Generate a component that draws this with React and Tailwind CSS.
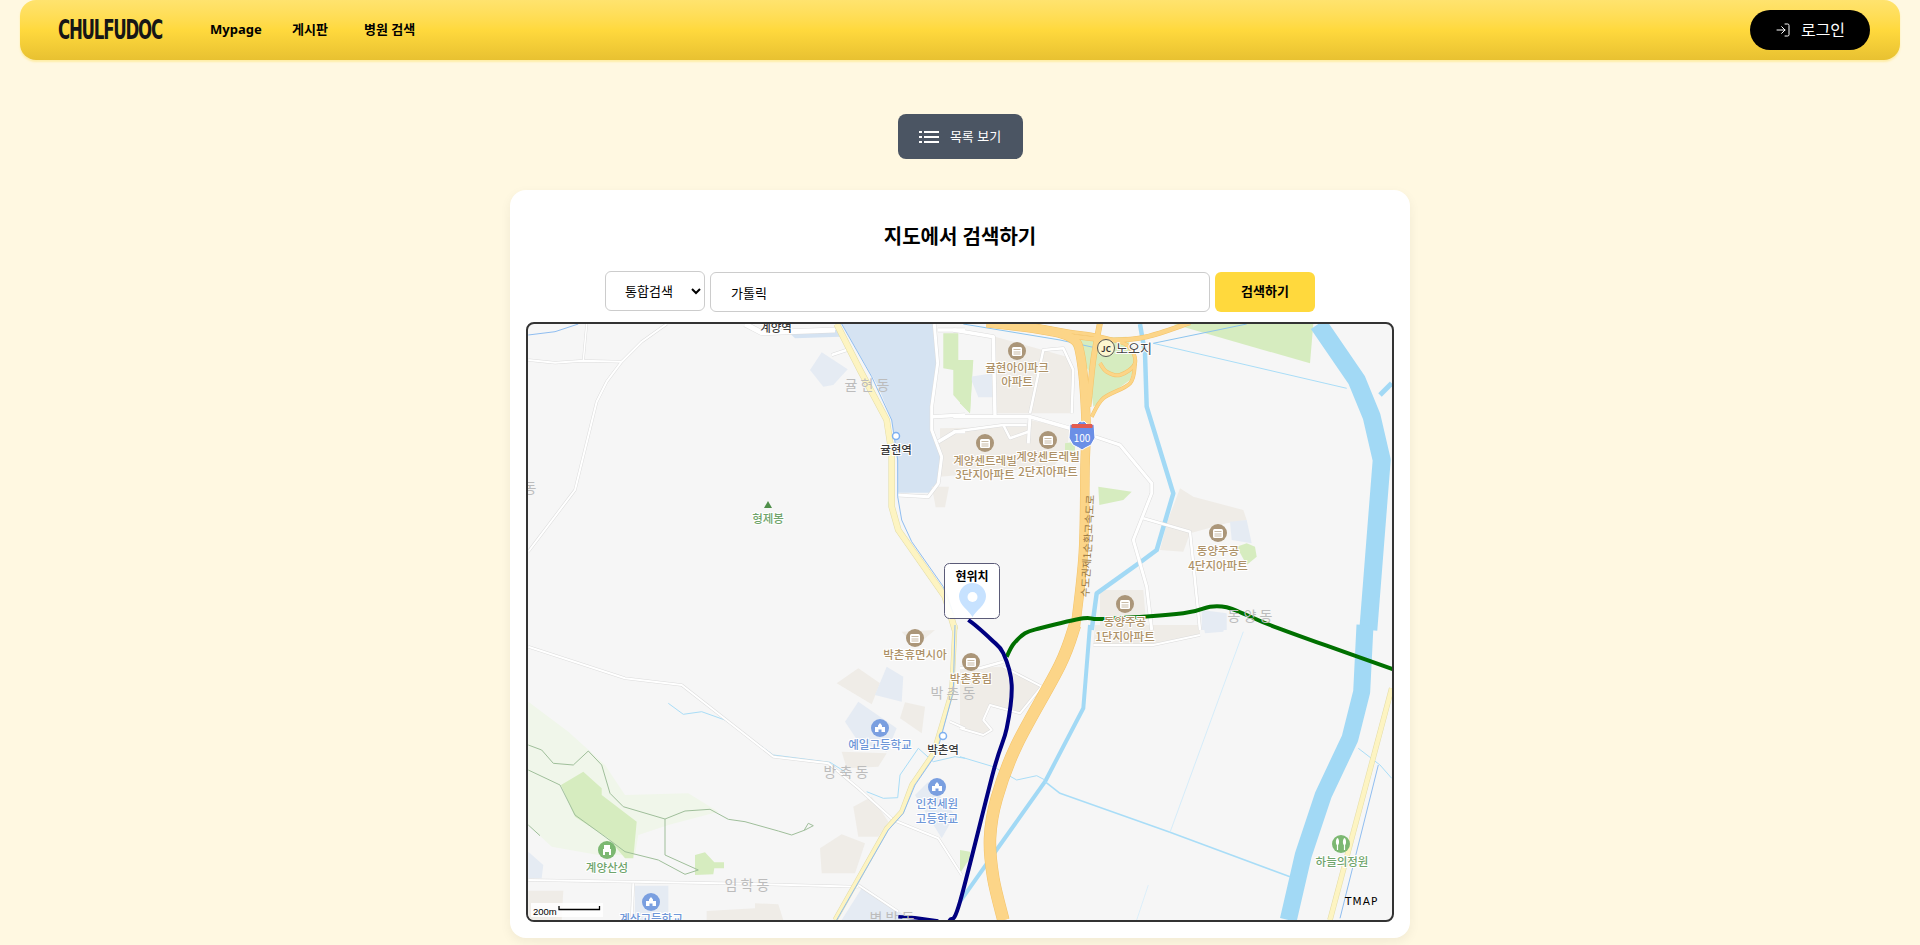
import React from "react";
import { LogIn } from "lucide-react";

const O = { a: [525, 320], b: [960, 320], c: [525, 625], d: [960, 625] };
const pts = (k, s) =>
  s.trim().split(/\s+/).map((p) => {
    const [x, y] = p.split(",");
    return [O[k][0] + x / 3, O[k][1] + y / 3];
  });
const pth = (k, s, close) =>
  "M" + pts(k, s).map(([x, y]) => `${x.toFixed(1)},${y.toFixed(1)}`).join("L") + (close ? "Z" : "");
const smooth = (p) => {
  let d = `M${p[0][0].toFixed(1)},${p[0][1].toFixed(1)}`;
  for (let i = 0; i < p.length - 1; i++) {
    const a = p[i - 1] || p[i], b = p[i], c = p[i + 1], e = p[i + 2] || c;
    d += `C${(b[0] + (c[0] - a[0]) / 6).toFixed(1)},${(b[1] + (c[1] - a[1]) / 6).toFixed(1)} ${(c[0] - (e[0] - b[0]) / 6).toFixed(1)},${(c[1] - (e[1] - b[1]) / 6).toFixed(1)} ${c[0].toFixed(1)},${c[1].toFixed(1)}`;
  }
  return d;
};
const spth = (k, s) => smooth(pts(k, s));

const BEIGE = "#efece7", PALE = "#e5ebf3", GREEN = "#d6ecbf", LIGHTG = "#f0f6ea", LAKE = "#d5e3f2", RIVER = "#a2d9f5", THIN = "#a9ddf7";

const fills = [
  [LIGHTG, "c", "10,230 130,320 240,420 300,510 490,505 580,560 430,600 340,630 330,690 220,690 80,665 10,600"],
  [LAKE, "a", "950,12 1228,12 1238,130 1218,260 1220,330 1250,410 1240,480 1215,518 1118,518 1115,400 1100,300 1060,200"],
  [LAKE, "a", "790,35 940,30 945,50 810,55"],
  [PALE, "a", "855,150 890,97 968,148 925,195 895,200"],
  [GREEN, "a", "1255,40 1300,40 1300,120 1345,120 1335,280 1320,265 1285,225 1285,150 1255,145"],
  [BEIGE, "a", "1240,370 1285,335 1320,335 1320,400 1250,400"],
  [BEIGE, "a", "1220,500 1272,500 1260,562 1232,562"],
  [BEIGE, "b", "105,50 320,110 340,160 335,280 110,280"],
  [BEIGE, "b", "-60,325 200,320 210,300 330,325 320,390 280,440 -60,470"],
  [PALE, "b", "30,170 100,160 100,232 55,232"],
  [GREEN, "b", "0,120 38,120 30,280 0,250"],
  [GREEN, "b", "330,60 500,50 530,120 510,180 400,260 385,150 350,100"],
  [GREEN, "b", "640,12 1060,12 1050,130"],
  [GREEN, "b", "415,500 515,515 490,540 418,555"],
  [GREEN, "b", "315,370 345,365 345,400 315,400"],
  [BEIGE, "b", "660,505 700,530 850,570 860,600 800,610 690,640 670,695 600,690 620,610"],
  [PALE, "b", "810,605 860,600 875,670 815,660"],
  [GREEN, "b", "860,670 885,680 890,710 860,735 830,680"],
  [BEIGE, "b", "420,810 550,810 560,930 420,930"],
  [PALE, "b", "725,870 800,880 800,930 725,930"],
  [BEIGE, "d", "405,0 720,0 720,30 580,60 400,60"],
  [PALE, "d", "730,0 795,0 790,20 735,25"],
  [BEIGE, "d", "0,130 130,125 245,185 180,265 90,240 70,285 95,315 70,330 0,310"],
  [BEIGE, "c", "1130,20 1230,15 1170,65"],
  [GREEN, "d", "0,675 30,680 30,700 0,745"],
  [GREEN, "c", "108,480 175,440 230,490 230,510 335,590 325,700 300,700 250,640 150,575"],
  [GREEN, "c", "510,690 540,682 568,712 597,712 597,730 568,730 565,748 510,750"],
  [BEIGE, "c", "935,175 1000,130 1065,175 1040,238"],
  [PALE, "c", "1050,210 1085,125 1135,155 1130,230"],
  [PALE, "c", "960,290 1000,230 1115,310 1085,380 1000,350"],
  [BEIGE, "c", "950,380 1085,385 1060,425 965,430"],
  [BEIGE, "c", "1125,280 1140,232 1200,245 1190,325"],
  [BEIGE, "c", "985,545 1040,515 1090,590 1060,635 1000,635"],
  [BEIGE, "c", "885,670 950,628 1020,655 990,745 890,745"],
  [PALE, "c", "1170,510 1210,470 1290,570 1250,640"],
  [PALE, "c", "10,680 55,720 50,760 10,760"],
  [PALE, "c", "330,782 430,782 430,885 330,885"],
  [BEIGE, "c", "10,797 115,797 110,885 10,885"],
  [BEIGE, "c", "545,858 690,850 690,835 760,838 775,885 545,885"],
  [PALE, "c", "1010,790 1130,865 1160,885 950,885"],
];

const water = [
  ["#8fbdf0", 1, "a", "10,45 90,35 160,12"],
  [RIVER, 4.5, "b", "540,12 555,100 560,260 640,520 590,690 550,720 410,820 395,930"],
  [RIVER, 4, "d", "390,0 370,250 255,470 120,660 0,830"],
  [RIVER, 3.5, "c", "1320,1000 1260,1080"],
  [RIVER, 18, "b", "1075,12 1190,180 1235,290 1265,420 1225,930"],
  [RIVER, 17, "d", "1215,0 1205,200 1170,340 1090,510 1030,690 985,885"],
  [RIVER, 5, "b", "1295,190 1260,225"],
  [THIN, 1, "b", "580,70 1160,205"],
  ["#8cc4ee", 1, "b", "860,12 580,70"],
  ["#8cc4ee", 1, "b", "10,12 300,60 400,82"],
  [THIN, 1, "d", "0,395 100,425 170,465 230,452 255,465"],
  [THIN, 1.6, "d", "255,470 300,505 630,622 990,755"],
  ["#cdeafa", 0.8, "d", "630,622 850,20"],
  ["#d5eefb", 0.8, "d", "530,885 565,780"],
  [THIN, 1, "d", "1195,370 1260,420 1295,460"],
  [THIN, 1, "c", "430,235 475,268 530,260 600,285 745,390 915,412 960,440"],
  [THIN, 1, "c", "1025,500 1075,520 1118,518 1125,450 1180,370 1225,410 1290,395 1320,400"],
];

const roads = [
  [2, "a", "10,120 90,128 175,122 290,125"],
  [1.5, "a", "185,12 175,122"],
  [2, "a", "425,12 350,65 290,125 245,185 215,245 150,510 10,695"],
  [5, "a", "660,12 710,38 930,30"],
  [2.5, "a", "920,105 965,90"],
  [3.5, "a", "1238,30 1320,30"],
  [3.5, "a", "1220,290 1320,285"],
  [3.5, "a", "1240,365 1290,335 1320,335"],
  [3, "a", "1118,525 1210,530 1240,490 1250,410 1220,330 1220,260 1238,130 1228,12"],
  [3.5, "b", "-20,30 100,50 105,290"],
  [3.5, "b", "-20,290 210,290 330,325"],
  [3, "b", "210,290 205,370"],
  [2.5, "b", "-20,335 130,315 200,315"],
  [2.5, "b", "130,315 150,355 205,335"],
  [2.5, "b", "210,280 250,90 310,85 340,150 335,280"],
  [3, "b", "405,350 480,375 575,490 575,520 520,660 560,800 575,930"],
  [2.5, "b", "550,595 690,635 720,930"],
  [2.5, "d", "130,110 60,130 0,130"],
  [2, "d", "130,125 245,185 180,265 90,240 70,285 95,315 70,330 0,310"],
  [2, "d", "400,60 580,60 720,30"],
  [2, "c", "10,65 300,160 470,180 745,395 910,415 1000,490 1105,585 1240,640 1310,750"],
  [2, "c", "10,765 590,775 1000,785"],
  [2, "c", "1000,780 1120,860"],
  [2, "c", "325,775 320,885"],
  [2, "c", "1275,290 1320,310"],
];

const trails = [
  "10,360 50,375 85,415 145,420 190,378 230,420 255,505 295,545 420,582 480,558 555,553 610,583 660,590 760,618 800,630 840,615 865,602 850,595 838,615",
  "10,435 105,480 150,570 240,635 300,680 400,705 480,748 520,735 420,690 420,582",
  "10,600 45,632",
];

const highways = [
  [8.5, "b", "80,8 250,30 335,55 362,110 378,300 375,440 370,700 345,930"],
  [11.5, "d", "345,0 300,120 170,360 110,520 90,640 100,760 130,885"],
  [5, "b", "420,8 400,120 385,260"],
  [4, "b", "690,8 560,50 450,60 300,45"],
  [3, "b", "180,8 330,35 400,45 500,75 525,130 480,165 440,155 420,130"],
  [3, "b", "525,130 510,190 430,235 395,290"],
];

const yellow = [
  [5.5, "a", "935,12 1005,150 1085,300 1100,400 1100,560 1120,630 1260,830 1290,930"],
  [4, "c", "1290,0 1280,200 1225,385 1160,480 1130,560 1085,610 930,885"],
  [4.5, "d", "1295,190 1110,885"],
];
const yellowBlue = [
  ["a", "950,12 1040,170 1100,300 1118,420 1118,530 1130,600 1160,665 1255,800 1285,880"],
  ["c", "1290,0 1285,200 1235,385 1170,480 1135,565 1090,615 935,885"],
  ["d", "1255,420 1140,880"],
];

const greenRoute = smooth([
  ...pts("d", "140,95 160,58 195,25"),
  ...pts("b", "240,925 370,895 430,897 670,880 750,860 800,862 860,885"),
  ...pts("d", "930,0 1100,62 1300,133"),
]);
const navyRoute = smooth([
  ...pts("b", "25,900"),
  ...pts("d", "45,0 95,45 130,85 155,180 140,310 100,440 0,830"),
  ...pts("c", "1275,885 1265,900"),
]);

const labels = [
  ["계양역", 776, 327, "dark", 11.5],
  ["귤 현 동", 867, 384, "dong", 14],
  ["동", 530, 487, "dong", 14],
  ["귤현역", 896, 449, "dark", 11.5],
  ["형제봉", 768, 518, "green", 11.5],
  ["귤현아이파크", 1017, 367, "apt", 11.5],
  ["아파트", 1017, 381, "apt", 11.5],
  ["계양센트레빌", 985, 460, "apt", 11.5],
  ["3단지아파트", 985, 474, "apt", 11.5],
  ["계양센트레빌", 1048, 456, "apt", 11.5],
  ["2단지아파트", 1048, 471, "apt", 11.5],
  ["동양주공", 1218, 550, "apt", 11.5],
  ["4단지아파트", 1218, 565, "apt", 11.5],
  ["동양주공", 1125, 621, "apt", 11.5],
  ["1단지아파트", 1125, 636, "apt", 11.5],
  ["동 양 동", 1250, 615, "dong", 14],
  ["박촌휴면시아", 915, 654, "apt", 11.5],
  ["박촌풍림", 971, 678, "apt", 11.5],
  ["박 촌 동", 953, 692, "dong", 14],
  ["방 축 동", 846, 771, "dong", 14],
  ["임 학 동", 747, 884, "dong", 14],
  ["병 방 동", 892, 917, "dong", 14],
  ["예일고등학교", 880, 744, "school", 11.5],
  ["박촌역", 943, 749, "dark", 11.5],
  ["인천세원", 937, 803, "school", 11.5],
  ["고등학교", 937, 818, "school", 11.5],
  ["계양산성", 607, 867, "green", 11.5],
  ["계산고등학교", 651, 918, "school", 11.5],
  ["하늘의정원", 1342, 861, "green", 11.5],
];
const colors = { dark: "#3a3a3a", dong: "#bcbcbc", green: "#6fa46b", apt: "#ad9167", school: "#6f97d8" };

const Apt = ({ x, y }) => (
  <g>
    <circle cx={x} cy={y} r="9" fill="#ab9679" />
    <rect x={x - 5} y={y - 4} width="10" height="9" rx="1.5" fill="#fff" />
    <path d={`M${x - 3.5} ${y - 1.5}h7M${x - 3.5} ${y + 1}h7M${x - 3.5} ${y + 3}h7`} stroke="#c9bba6" strokeWidth="1" />
  </g>
);
const School = ({ x, y }) => (
  <g>
    <circle cx={x} cy={y} r="9" fill="#7a9fe0" />
    <path d={`M${x} ${y - 5}l2 2.5v1.5h3v5h-3.5v-2.5h-3v2.5h-3.5v-5h3v-1.5z`} fill="#fff" />
  </g>
);

export default function App() {
  return (
    <div className="min-h-[945px] bg-[#fff8e1] font-['Noto_Sans','Noto_Sans_CJK_KR',sans-serif] overflow-hidden">
      <header className="mx-5 h-[60px] rounded-2xl bg-gradient-to-b from-[#ffe36e] via-[#ffd93d] via-50% to-[#e8c131] shadow-[0_2px_2px_rgba(255,217,61,0.35)] flex items-center pl-[38px] pr-[30px]">
        <span className="w-[106px] origin-left scale-x-[0.83] scale-y-[1.35] font-['DejaVu_Sans'] font-bold text-[20px] leading-none tracking-[-1.5px] text-[#161616] whitespace-nowrap">CHULFUDOC</span>
        <nav className="flex items-center ml-[46px] text-[13px] font-bold text-black">
          <span className="w-[82px] whitespace-nowrap">Mypage</span>
          <span className="w-[72px] whitespace-nowrap">게시판</span>
          <span className="whitespace-nowrap">병원 검색</span>
        </nav>
        <button className="ml-auto w-[120px] h-10 rounded-full bg-black text-white flex items-center justify-center gap-[10px] text-[16px]">
          <LogIn size={16} strokeWidth={1.5} />
          로그인
        </button>
      </header>

      <div className="flex justify-center pt-[54px]">
        <button className="w-[125px] h-[45px] rounded-lg bg-[#4b5563] text-white text-[13px] flex items-center justify-center gap-[11px]">
          <svg width="20" height="14" viewBox="0 0 20 14" fill="#fff">
            <rect x="0" y="1" width="3" height="2" />
            <rect x="5" y="1" width="15" height="2" />
            <rect x="0" y="6" width="3" height="2" />
            <rect x="5" y="6" width="15" height="2" />
            <rect x="0" y="11" width="3" height="2" />
            <rect x="5" y="11" width="15" height="2" />
          </svg>
          목록 보기
        </button>
      </div>

      <main className="w-[900px] mx-auto mt-[31px] bg-white rounded-2xl shadow-[0_4px_12px_rgba(0,0,0,0.06)] px-4 pt-[33px] pb-4">
        <h2 className="text-center text-[20px] leading-7 font-bold text-black">지도에서 검색하기</h2>
        <div className="flex justify-center gap-[5px] mt-5 mb-[10px] h-[41px]">
          <select className="self-start w-[100px] h-10 border border-[#ccc] rounded-md bg-white pl-[15px] text-[13px] text-black">
            <option>통합검색</option>
          </select>
          <input readOnly value="가톨릭" className="self-end w-[500px] h-10 border border-[#ccc] rounded-md px-5 text-[13px] text-black" />
          <button className="self-end w-[100px] h-10 rounded-md bg-[#ffd93d] text-[13px] font-semibold text-black">검색하기</button>
        </div>
        <div className="h-[600px] border-2 border-[#333] rounded-lg overflow-hidden bg-[#f6f6f6]">
          <svg viewBox="528 324 864 596" className="block w-full h-full font-['Noto_Sans_CJK_KR',sans-serif]">
            {fills.map(([c, k, s], i) => <path key={i} d={pth(k, s, true)} fill={c} />)}
            {water.map(([c, w, k, s], i) => <path key={i} d={pth(k, s)} stroke={c} strokeWidth={w} fill="none" strokeLinejoin="round" />)}
            {roads.map(([w, k, s], i) => <path key={i} d={pth(k, s)} stroke="#dcdcdc" strokeWidth={w + 1} fill="none" strokeLinejoin="round" />)}
            {roads.map(([w, k, s], i) => <path key={i} d={pth(k, s)} stroke="#fff" strokeWidth={w} fill="none" strokeLinejoin="round" />)}
            {trails.map((s, i) => <path key={i} d={pth("c", s)} stroke="#9fbe9a" strokeWidth="1" fill="none" />)}
            {yellow.map(([w, k, s], i) => <path key={i} d={pth(k, s)} stroke="#e3dca6" strokeWidth={w + 1} fill="none" strokeLinejoin="round" />)}
            {yellow.map(([w, k, s], i) => <path key={i} d={pth(k, s)} stroke="#fdf4c2" strokeWidth={w} fill="none" strokeLinejoin="round" />)}
            {yellowBlue.map(([k, s], i) => <path key={i} d={pth(k, s)} stroke="#8fbdf0" strokeWidth="1" fill="none" strokeLinejoin="round" />)}
            {highways.map(([w, k, s], i) => <path key={i} d={spth(k, s)} stroke="#f3c36a" strokeWidth={w + 1} fill="none" strokeLinejoin="round" />)}
            {highways.map(([w, k, s], i) => <path key={i} d={spth(k, s)} stroke="#fcd588" strokeWidth={w} fill="none" strokeLinejoin="round" />)}

            {/* routes */}
            <path d={greenRoute} stroke="#007000" strokeWidth="4" fill="none" />
            <path d={navyRoute} stroke="#000080" strokeWidth="4" fill="none" />
            <path d={pth("c", "1120,875 1170,878 1240,888")} stroke="#000080" strokeWidth="3.5" fill="none" />

            {/* highway name */}
            <text transform="translate(1087 546) rotate(-87)" textAnchor="middle" dominantBaseline="central" fontSize="10.500" fill="#9a7b45">수도권제1순환고속도로</text>

            {/* POI icons */}
            {[[1017, 351], [985, 443], [1048, 440], [1218, 533], [1125, 604], [915, 638], [971, 662], [543, 930]].map(([x, y], i) => <Apt key={i} x={x} y={y} />)}
            {[[880, 728], [937, 787], [651, 902]].map(([x, y], i) => <School key={i} x={x} y={y} />)}
            <g>
              <circle cx="607" cy="850" r="9" fill="#7cb872" />
              <path d="M604 845h6v4h1v6h-2v-3h-4v3h-2v-6h1z" fill="#fff" />
              <circle cx="1341" cy="844" r="9" fill="#7cb872" />
              <path d="M1337.5 838c2 1 2 6 .6 7v5h-1.200v-5c-1.400-1-1.400-6 .6-7zM1344.500 838c2 1 2 6 .6 7v5h-1.200v-5c-1.400-1-1.400-6 .6-7z" fill="#fff" />
              <path d="M768 501l4 7h-8z" fill="#4f8f4a" />
            </g>

            {/* stations */}
            <circle cx="896" cy="436" r="3.500" fill="#fff" stroke="#7eb0f0" strokeWidth="1.500" />
            <circle cx="943" cy="736" r="3.500" fill="#fff" stroke="#7eb0f0" strokeWidth="1.500" />

            {/* labels */}
            {labels.map(([t, x, y, c, s], i) => (
              <text key={i} x={x} y={y} textAnchor="middle" dominantBaseline="central" fontSize={s} fill={colors[c]} stroke={c === "dong" ? "none" : "#fff"} strokeWidth="2" paintOrder="stroke" fontWeight={c === "dong" ? 400 : 500}>{t}</text>
            ))}

            {/* JC */}
            <circle cx="1106" cy="348" r="8.500" fill="#fdf6d0" stroke="#555" strokeWidth="1" />
            <text x="1106" y="348" textAnchor="middle" dominantBaseline="central" fontSize="8" fontWeight="700" fill="#333">JC</text>
            <text x="1134" y="347" textAnchor="middle" dominantBaseline="central" fontSize="13" fill="#444" stroke="#fff" strokeWidth="2" paintOrder="stroke">노오지</text>

            {/* shield */}
            <path d="M1070 424l3 1 4-1 3-3 2 1 2-1 3 3 4 1 3-1 1 14-4 7-6 3-3 2-3-2-6-3-4-7z" fill="#6b8fe6" stroke="#fff" strokeWidth="1" />
            <rect x="1071.500" y="424" width="21" height="4" rx="1" fill="#e35b4f" />
            <text x="1082" y="437" textAnchor="middle" dominantBaseline="central" fontSize="10" fill="#fff">100</text>

            {/* current position */}
            <rect x="944.500" y="563.500" width="55" height="55" rx="5" fill="#fff" fillOpacity="0.92" stroke="#5b5b78" strokeWidth="1" />
            <text x="972" y="575" textAnchor="middle" dominantBaseline="central" fontSize="12" fontWeight="700" fill="#000">현위치</text>
            <path d="M972.500 617c-3-6-13.500-12-13.500-20.500a13.500 13.500 0 0 1 27 0c0 8.500-10.500 14.500-13.500 20.500z" fill="#c7e2ff" />
            <circle cx="972.500" cy="597" r="5" fill="#fff" />

            {/* scale */}
            <rect x="531" y="903" width="72" height="14" fill="#fff" fillOpacity="0.85" />
            <text x="533" y="911" dominantBaseline="central" fontSize="9.500" fontFamily="Liberation Sans" fill="#000">200m</text>
            <path d="M559 906v3.500h40.500v-3.500" stroke="#000" strokeWidth="1.300" fill="none" />

            {/* tmap */}
            <text x="1345" y="901" dominantBaseline="central" fontSize="10.500" letterSpacing="1.100" fontFamily="DejaVu Sans" fill="#000">TMAP</text>
          </svg>
        </div>
      </main>
    </div>
  );
}
